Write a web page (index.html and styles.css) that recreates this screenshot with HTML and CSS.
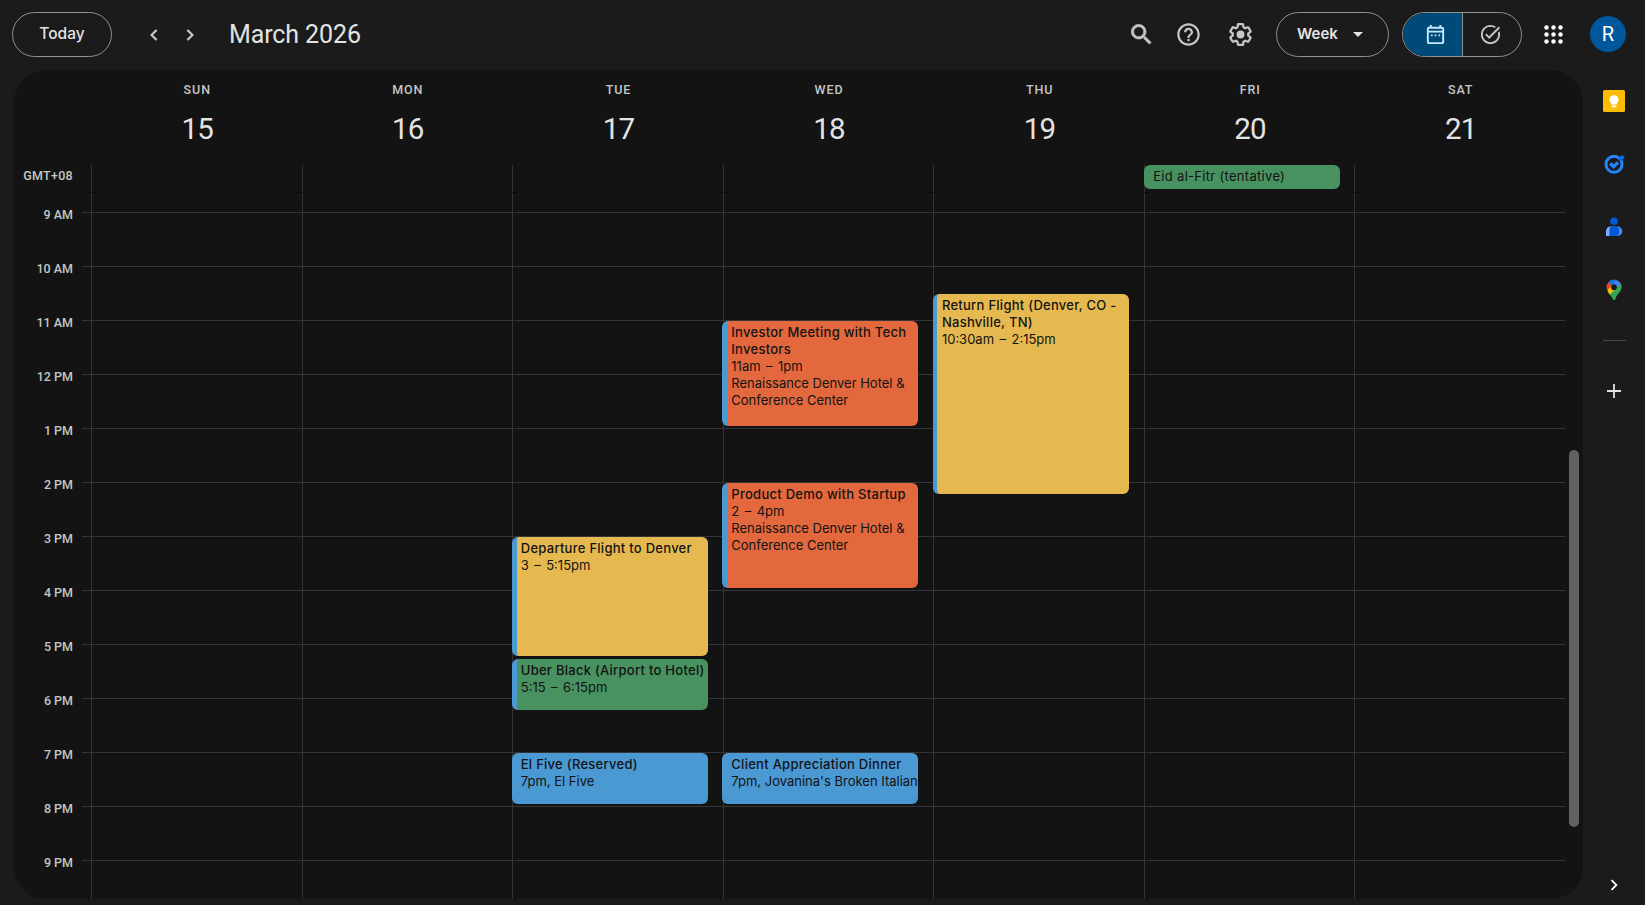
FILE: index.html
```html
<!DOCTYPE html>
<html lang="en">
    <head>
        <meta charset="UTF-8" />
        <meta name="viewport" content="width=device-width, initial-scale=1.0" />
        <title>Calendar - March 2026</title>
        <link rel="stylesheet" href="styles.css">
    </head>
    <body>
        <header class="topbar">
            <button class="pill today-button">Today</button>
            <div class="nav-arrows">
                <svg class="arrow" viewBox="0 0 24 24"><path d="M15.4 7.4 14 6l-6 6 6 6 1.4-1.4L10.8 12z" /></svg>
                <svg class="arrow" viewBox="0 0 24 24"><path d="M10 6 8.6 7.4l4.6 4.6-4.6 4.6L10 18l6-6z" /></svg>
            </div>
            <h1 class="month">March 2026</h1>
            <div class="tools">
                <svg class="tool-icon search-icon" viewBox="0 0 24 24"><path d="M15.5 14h-.79l-.28-.27A6.47 6.47 0 0 0 16 9.5 6.5 6.5 0 1 0 9.5 16c1.61 0 3.09-.59 4.23-1.57l.27.28v.79l5 4.99L20.49 19l-4.99-5zm-6 0C7.01 14 5 11.99 5 9.5S7.01 5 9.5 5 14 7.01 14 9.5 11.99 14 9.5 14z" /></svg>
                <svg class="tool-icon" viewBox="0 0 24 24"><path d="M11 18h2v-2h-2v2zm1-16C6.48 2 2 6.48 2 12s4.48 10 10 10 10-4.48 10-10S17.52 2 12 2zm0 18c-4.41 0-8-3.59-8-8s3.59-8 8-8 8 3.59 8 8-3.59 8-8 8zm0-14c-2.21 0-4 1.79-4 4h2c0-1.1.9-2 2-2s2 .9 2 2c0 2-3 1.75-3 5h2c0-2.25 3-2.5 3-5 0-2.21-1.79-4-4-4z" /></svg>
                <svg class="tool-icon" viewBox="0 0 24 24"><path d="M13.85 22.25h-3.7c-.74 0-1.36-.54-1.45-1.27l-.27-1.89c-.27-.14-.53-.29-.79-.46l-1.8.72c-.7.26-1.47-.03-1.81-.65L2.2 15.53c-.35-.66-.2-1.44.36-1.88l1.53-1.19c-.01-.15-.02-.3-.02-.46 0-.15.01-.31.02-.46l-1.52-1.19c-.59-.45-.74-1.26-.37-1.88l1.85-3.19c.34-.62 1.11-.9 1.79-.63l1.81.73c.26-.17.52-.32.78-.46l.27-1.91c.09-.7.71-1.25 1.44-1.25h3.7c.74 0 1.36.54 1.45 1.27l.27 1.89c.27.14.53.29.79.46l1.8-.72c.71-.26 1.48.03 1.82.65l1.84 3.18c.36.66.2 1.44-.36 1.88l-1.52 1.19c.01.15.02.3.02.46s-.01.31-.02.46l1.52 1.19c.56.45.72 1.23.37 1.86l-1.86 3.22c-.34.62-1.11.9-1.8.63l-1.8-.72c-.26.17-.52.32-.78.46l-.27 1.91c-.1.68-.72 1.22-1.46 1.22zm-3.23-2h2.76l.37-2.55.53-.22c.44-.18.88-.44 1.34-.78l.45-.34 2.38.96 1.38-2.4-2.03-1.58.07-.56c.03-.26.06-.51.06-.78s-.03-.53-.06-.78l-.07-.56 2.03-1.58-1.39-2.4-2.39.96-.45-.35c-.42-.32-.87-.58-1.33-.77l-.52-.22-.37-2.55h-2.76l-.37 2.55-.53.21c-.44.19-.88.44-1.34.79l-.45.33-2.38-.95-1.39 2.39 2.03 1.58-.07.56a7 7 0 0 0-.06.79c0 .26.02.53.06.78l.07.56-2.03 1.58 1.38 2.4 2.39-.96.45.35c.43.33.86.58 1.33.77l.53.22z" /><circle cx="12" cy="12" r="3.5" /></svg>
            </div>
            <button class="pill week-button">Week <span class="caret"></span></button>
            <div class="pill switch">
                <div class="switch-half active">
                    <svg class="switch-icon" viewBox="0 0 24 24"><path d="M19 4h-1V2h-2v2H8V2H6v2H5c-1.1 0-2 .9-2 2v14c0 1.1.9 2 2 2h14c1.1 0 2-.9 2-2V6c0-1.1-.9-2-2-2zm0 16H5V10h14v10zm0-12H5V6h14v2zM7.2 12h1.8v1.8H7.2zm3.9 0h1.8v1.8h-1.8zm3.9 0h1.8v1.8H15z" /></svg>
                </div>
                <div class="switch-half">
                    <svg class="switch-icon" viewBox="0 0 24 24"><path d="M22 5.18 10.59 16.6l-4.24-4.24 1.41-1.41 2.83 2.83 10-10zM19.79 10.22c.13.57.21 1.17.21 1.78 0 4.42-3.58 8-8 8s-8-3.58-8-8 3.58-8 8-8c1.58 0 3.04.46 4.28 1.25l1.44-1.44A9.9 9.9 0 0 0 12 2C6.48 2 2 6.48 2 12s4.48 10 10 10 10-4.48 10-10c0-1.19-.22-2.33-.6-3.39z" /></svg>
                </div>
            </div>
            <svg class="apps" viewBox="0 0 19 19">
                <circle cx="2.5" cy="2.5" r="2.2" /><circle cx="9.5" cy="2.5" r="2.2" /><circle cx="16.5" cy="2.5" r="2.2" />
                <circle cx="2.5" cy="9.5" r="2.2" /><circle cx="9.5" cy="9.5" r="2.2" /><circle cx="16.5" cy="9.5" r="2.2" />
                <circle cx="2.5" cy="16.5" r="2.2" /><circle cx="9.5" cy="16.5" r="2.2" /><circle cx="16.5" cy="16.5" r="2.2" />
            </svg>
            <div class="avatar">R</div>
        </header>

        <div class="content">
            <main class="calendar">
                <div class="day-names">
                    <div class="day"><span class="day-name">SUN</span><span class="day-number">15</span></div>
                    <div class="day"><span class="day-name">MON</span><span class="day-number">16</span></div>
                    <div class="day"><span class="day-name">TUE</span><span class="day-number">17</span></div>
                    <div class="day"><span class="day-name">WED</span><span class="day-number">18</span></div>
                    <div class="day"><span class="day-name">THU</span><span class="day-number">19</span></div>
                    <div class="day"><span class="day-name">FRI</span><span class="day-number">20</span></div>
                    <div class="day"><span class="day-name">SAT</span><span class="day-number">21</span></div>
                </div>

                <div class="all-day">
                    <div class="timezone">GMT+08</div>
                    <div class="all-day-columns">
                        <div class="column"></div>
                        <div class="column"></div>
                        <div class="column"></div>
                        <div class="column"></div>
                        <div class="column"></div>
                        <div class="column"><div class="all-day-event">Eid al-Fitr (tentative)</div></div>
                        <div class="column"></div>
                    </div>
                </div>

                <div class="week">
                    <div class="hours">
                        <div class="hour">9 AM</div>
                        <div class="hour">10 AM</div>
                        <div class="hour">11 AM</div>
                        <div class="hour">12 PM</div>
                        <div class="hour">1 PM</div>
                        <div class="hour">2 PM</div>
                        <div class="hour">3 PM</div>
                        <div class="hour">4 PM</div>
                        <div class="hour">5 PM</div>
                        <div class="hour">6 PM</div>
                        <div class="hour">7 PM</div>
                        <div class="hour">8 PM</div>
                        <div class="hour">9 PM</div>
                    </div>
                    <div class="lines"></div>
                    <div class="columns">
                        <div class="column"></div>
                        <div class="column"></div>
                        <div class="column">
                            <div class="event yellow from-3pm">
                                <div class="event-title">Departure Flight to Denver</div>
                                <div class="event-time">3 – 5:15pm</div>
                            </div>
                            <div class="event green from-515pm">
                                <div class="event-title">Uber Black (Airport to Hotel)</div>
                                <div class="event-time">5:15 – 6:15pm</div>
                            </div>
                            <div class="event blue from-7pm">
                                <div class="event-title">El Five (Reserved)</div>
                                <div>7pm, El Five</div>
                            </div>
                        </div>
                        <div class="column">
                            <div class="event orange from-11am">
                                <div class="event-title">Investor Meeting with Tech Investors</div>
                                <div class="event-time">11am – 1pm</div>
                                <div>Renaissance Denver Hotel &amp; Conference Center</div>
                            </div>
                            <div class="event orange from-2pm">
                                <div class="event-title">Product Demo with Startup</div>
                                <div class="event-time">2 – 4pm</div>
                                <div>Renaissance Denver Hotel &amp; Conference Center</div>
                            </div>
                            <div class="event blue from-7pm">
                                <div class="event-title">Client Appreciation Dinner</div>
                                <div class="one-line">7pm, Jovanina's Broken Italian</div>
                            </div>
                        </div>
                        <div class="column">
                            <div class="event yellow from-1030am">
                                <div class="event-title">Return Flight (Denver, CO - Nashville, TN)</div>
                                <div class="event-time">10:30am – 2:15pm</div>
                            </div>
                        </div>
                        <div class="column"></div>
                        <div class="column"></div>
                    </div>
                    <div class="scrollbar"><div class="scroll-thumb"></div></div>
                </div>
            </main>

            <aside class="side-panel">
                <svg class="side-icon" viewBox="0 0 24 24">
                    <rect x="1" y="1" width="22" height="22" rx="1.5" fill="#fbbc04" />
                    <circle cx="12" cy="10.8" r="4.6" fill="#fff" />
                    <path d="M9.5 12h5v3.6h-5zM9.5 16.4h5v1.8h-5z" fill="#fff" />
                </svg>
                <svg class="side-icon" viewBox="0 0 24 24">
                    <circle cx="12" cy="12.3" r="8" fill="none" stroke="#2684fc" stroke-width="3" />
                    <path d="M8.2 11.4 11.7 14.6 16 10.4" fill="none" stroke="#2684fc" stroke-width="3.4" />
                    <path d="M20.2 2.8 22.8 5.4 18.6 9.6 16 7z" fill="#0d6ae6" />
                </svg>
                <svg class="side-icon" viewBox="0 0 24 24">
                    <circle cx="12" cy="6.2" r="3.8" fill="#0059d0" />
                    <path d="M8.5 11.5h4V21H4v-5a4.5 4.5 0 0 1 4.5-4.5z" fill="#7fa8ff" />
                    <path d="M12 11.5h3.6a4.7 4.7 0 0 1 0 9.5H12z" fill="#4d86f7" />
                    <path d="M10.5 11.5h3a3.5 3.5 0 0 1 3.5 3.5v2.5a3.5 3.5 0 0 1-3.5 3.5H7.5v-6a3.5 3.5 0 0 1 3-3.5z" fill="#0059d0" />
                </svg>
                <svg class="side-icon" viewBox="0 0 24 24">
                    <path d="M6.1 4.4A7.6 7.6 0 0 1 14.2 1.9L8.9 8z" fill="#1a73e8" />
                    <path d="M6.3 4.2 9.6 7 5.4 12.4A7.6 7.6 0 0 1 6.3 4.2z" fill="#ea4335" />
                    <path d="M14.2 1.9a7.6 7.6 0 0 1 4.6 3.8L14.8 10.4 10 6.5z" fill="#4285f4" />
                    <path d="M5.3 12.2 10 6.7l4.2 4.6-6.3 5.6c-.9-1.3-2-2.8-2.6-4.7z" fill="#fbbc04" />
                    <path d="M18.7 5.5c2.2 4.5.1 7.5-2.9 10.8-1.5 1.9-1.9 3.2-2.4 4.8-.4 1.6-2.2 1.6-2.7 0-.5-1.7-1.5-3-2.9-4.3z" fill="#34a853" />
                    <circle cx="12" cy="9.2" r="2.9" fill="#1b1b1b" />
                </svg>
                <div class="side-divider"></div>
                <svg class="plus" viewBox="0 0 14 14"><path d="M6.1 0h1.8v6.1H14v1.8H7.9V14H6.1V7.9H0V6.1h6.1z" /></svg>
                <svg class="collapse" viewBox="0 0 24 24"><path d="M10 6 8.6 7.4l4.6 4.6-4.6 4.6L10 18l6-6z" /></svg>
            </aside>
        </div>
    </body>
</html>
```
FILE: styles.css
```css
* {
    box-sizing: border-box;
}
body {
    margin: 0;
    height: 905px;
    overflow: hidden;
    font-family: Inter, Roboto, sans-serif;
    background-color: #1b1b1b;
    color: #e3e3e3;
}
.topbar {
    display: flex;
    align-items: center;
    height: 70px;
    padding: 0 19px 1px 12px;
}
.pill {
    height: 45px;
    border: 1px solid #8e918f;
    border-radius: 23px;
    background: none;
    color: #e3e3e3;
    font-family: Inter, Roboto, sans-serif;
    font-size: 15px;
    font-weight: 500;
}
.today-button {
    width: 100px;
    padding: 0 0 2px;
    font-size: 15.5px;
}
.nav-arrows {
    display: flex;
    gap: 14px;
    margin-left: 31px;
}
.arrow {
    width: 22px;
    height: 22px;
    fill: #c4c7c5;
    stroke: #c4c7c5;
    stroke-width: 0.6px;
}
.month {
    margin: 0 0 1px 28px;
    font-family: Roboto, sans-serif;
    font-size: 25px;
    font-weight: 400;
    letter-spacing: -0.1px;
}
.tools {
    display: flex;
    align-items: center;
    gap: 25px;
    margin-left: auto;
    margin-right: 22px;
}
.tool-icon {
    width: 27px;
    height: 27px;
    fill: #c4c7c5;
}
.search-icon {
    margin-right: -5px;
    stroke: #c4c7c5;
    stroke-width: 0.7px;
}
.week-button {
    display: flex;
    align-items: center;
    width: 113px;
    padding: 0 0 2px 20px;
    font-weight: 600;
}
.caret {
    margin: 2px 0 0 15px;
    border: 5px solid transparent;
    border-top-color: #e3e3e3;
    border-bottom: none;
}
.switch {
    display: flex;
    width: 120px;
    margin: 0 22px 0 13px;
    overflow: hidden;
}
.switch-half {
    display: flex;
    width: 59px;
    align-items: center;
    padding-left: 16px;
}
.active {
    width: 60px;
    padding-left: 21px;
    background-color: #004a77;
    border-right: 1px solid #8e918f;
}
.switch-icon {
    flex-shrink: 0;
    width: 23px;
    height: 23px;
    margin-bottom: 1px;
    fill: #c4c7c5;
}
.active .switch-icon {
    fill: #c2e7ff;
}
.apps {
    width: 19px;
    height: 19px;
    margin-right: 27px;
    fill: #fff;
}
.avatar {
    width: 36px;
    height: 36px;
    margin-bottom: 1px;
    border-radius: 50%;
    background-color: #01579b;
    color: #fff;
    font-family: Roboto, sans-serif;
    font-size: 20px;
    font-weight: 400;
    line-height: 37px;
    text-align: center;
}
.content {
    display: flex;
    height: 829px;
}
.calendar {
    display: flex;
    flex-direction: column;
    width: 1569px;
    margin-left: 14px;
    border-radius: 32px;
    background-color: #131313;
    overflow: hidden;
}
.day-names,
.all-day-columns,
.columns {
    display: grid;
    grid-template-columns: repeat(7, 1fr);
}
.day-names {
    flex-shrink: 0;
    height: 95px;
    margin: 0 18px 0 77px;
}
.day {
    display: flex;
    flex-direction: column;
    align-items: center;
    padding-top: 12px;
    padding-left: 2px;
    font-family: Roboto, sans-serif;
}
.day-name {
    color: #c4c7c5;
    font-size: 12.5px;
    font-weight: 500;
    line-height: 16px;
    letter-spacing: 0.9px;
}
.day-number {
    margin-top: 13px;
    font-size: 29.5px;
    line-height: 36px;
    letter-spacing: -0.8px;
}
.all-day {
    display: flex;
    flex-shrink: 0;
    height: 28px;
    margin-right: 18px;
    border-bottom: 1px solid #101010;
}
.timezone {
    width: 59px;
    margin-right: 18px;
    padding-top: 3px;
    color: #c4c7c5;
    font-family: Roboto, sans-serif;
    font-size: 12.5px;
    font-weight: 500;
    line-height: 16px;
    letter-spacing: 0.3px;
    text-align: right;
}
.all-day-columns {
    flex: 1;
}
.column {
    border-left: 1px solid #333537;
}
.all-day-event {
    height: 24px;
    width: 196px;
    margin-left: -0.6px;
    padding-left: 9px;
    border-radius: 6px;
    background-color: #489160;
    color: #131313;
    font-size: 13px;
    line-height: 23px;
    letter-spacing: 0.3px;
}
.week {
    display: grid;
    flex: 1;
    grid-template-columns: 59px 9px 9px 1474px 18px;
    grid-template-rows: 706px;
    min-height: 0;
}
.hours,
.lines,
.columns,
.scrollbar {
    grid-row: 1;
}
.hours {
    grid-column: 1;
    padding-top: 14px;
}
.hour {
    height: 54px;
    color: #c4c7c5;
    font-family: Roboto, sans-serif;
    font-size: 12.5px;
    font-weight: 500;
    line-height: 16px;
    text-align: right;
}
.lines {
    grid-column: 3 / 5;
    margin-top: 19px;
    background: repeating-linear-gradient(#333537 0 1px, transparent 1px 54px);
}
.columns {
    grid-column: 4;
}
/* one row for each quarter of an hour, starting at 9 AM */
.columns .column {
    display: grid;
    grid-template-columns: 194.7px;
    grid-auto-rows: 13.5px;
    padding-top: 20px;
}
.event {
    margin: 0 0 3px -1.4px;
    padding: 3px 0 0 4px;
    border-left: 5px solid #4b99d2;
    border-radius: 6px;
    color: #131313;
    font-size: 13px;
    line-height: 17px;
    overflow: hidden;
}
.event-title {
    font-weight: 500;
    letter-spacing: 0.27px;
}
.event-time {
    word-spacing: 1.8px;
}
.one-line {
    white-space: nowrap;
}
.yellow {
    background-color: #e6b950;
}
.green {
    background-color: #489160;
}
.blue {
    background-color: #4b99d2;
}
.orange {
    background-color: #e3683e;
}
.from-1030am {
    grid-row: 7 / span 15;
    border-left-width: 4px;
    padding-left: 5px;
}
.from-11am {
    grid-row: 9 / span 8;
}
.from-2pm {
    grid-row: 21 / span 8;
}
.from-3pm {
    grid-row: 25 / span 9;
}
.from-515pm {
    grid-row: 34 / span 4;
}
.from-7pm {
    grid-row: 41 / span 4;
}
.scrollbar {
    grid-column: 5;
    padding: 257px 4px 0;
}
.scroll-thumb {
    height: 377px;
    border-radius: 5px;
    background-color: #616161;
}
.side-panel {
    display: flex;
    flex: 1;
    flex-direction: column;
    align-items: center;
    padding-top: 19px;
}
.side-icon {
    width: 24px;
    height: 24px;
    margin-bottom: 39px;
}
.side-divider {
    width: 23px;
    height: 1px;
    margin-top: -1px;
    border-top: 1px solid #444746;
}
.plus {
    width: 14px;
    height: 14px;
    margin-top: 43px;
    fill: #e3e3e3;
}
.collapse {
    width: 22px;
    height: 22px;
    margin-top: auto;
    margin-bottom: 3px;
    fill: #fff;
}
```
